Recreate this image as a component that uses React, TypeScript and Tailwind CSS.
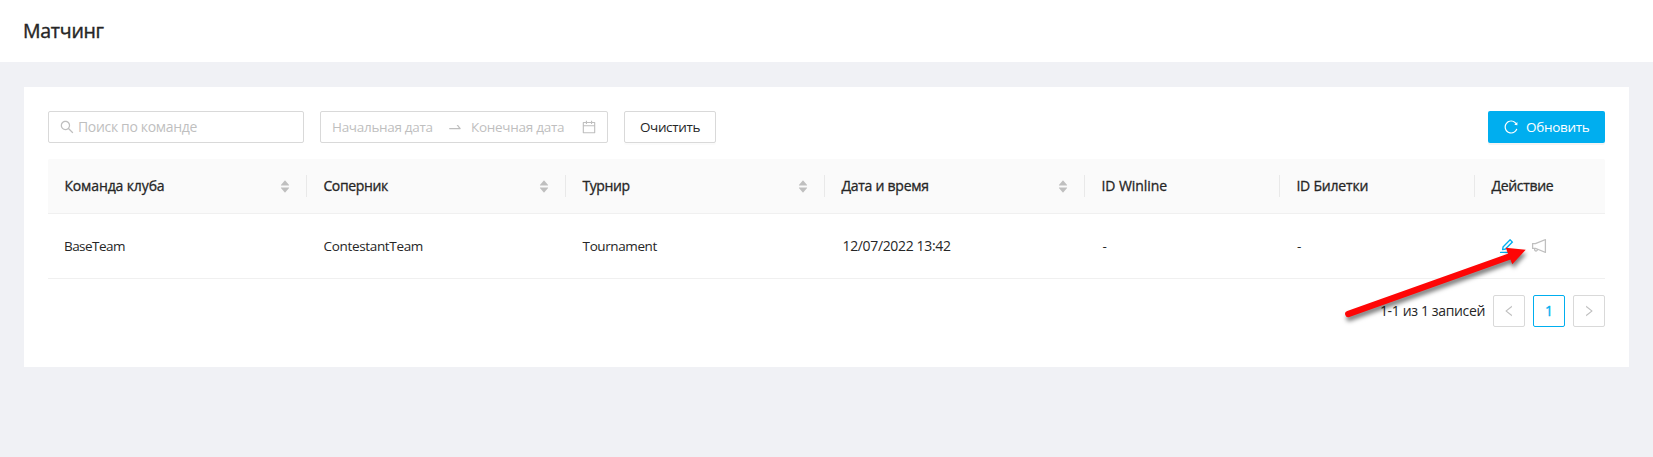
import React from "react";
import {
  AiOutlineSearch,
  AiOutlineSwapRight,
  AiOutlineCalendar,
  AiOutlineReload,
  AiOutlineEdit,
  AiOutlineNotification,
  AiOutlineLeft,
  AiOutlineRight,
  AiFillCaretUp,
  AiFillCaretDown,
} from "react-icons/ai";

const columns = [
  { title: "Команда клуба", sortable: true, tracking: "tracking-[-0.12px]" },
  { title: "Соперник", sortable: true, tracking: "tracking-[-0.35px]" },
  { title: "Турнир", sortable: true, tracking: "tracking-[-0.4px]" },
  { title: "Дата и время", sortable: true, tracking: "tracking-[-0.25px]" },
  { title: "ID Winline", sortable: false, tracking: "tracking-[-0.05px]" },
  { title: "ID Билетки", sortable: false, tracking: "tracking-[-0.2px]" },
  { title: "Действие", sortable: false, tracking: "tracking-[-0.3px]" },
];

function Sorter() {
  return (
    <span className="flex flex-col items-center text-[12px] text-[#bfbfbf]">
      <AiFillCaretUp />
      <AiFillCaretDown className="-mt-[5px]" />
    </span>
  );
}

function Toolbar() {
  return (
    <div className="flex h-8 items-center gap-4 text-[13.5px]">
      <div className="flex h-8 w-64 items-center rounded-xs border border-[#d9d9d9] pl-[10px] text-[#bfbfbf]">
        <AiOutlineSearch className="mr-[3px] size-4" />
        <span className="text-[14px] tracking-[-0.33px]">Поиск по команде</span>
      </div>
      <div className="flex h-8 w-72 items-center rounded-xs border border-[#d9d9d9] pr-[10px] pl-[11px] text-[#bfbfbf]">
        <span className="w-[115px] tracking-[-0.3px]">Начальная дата</span>
        <AiOutlineSwapRight className="mr-2 size-4" />
        <span className="flex-1 tracking-[-0.28px]">Конечная дата</span>
        <AiOutlineCalendar className="size-4" />
      </div>
      <button className="h-8 w-[92px] rounded-xs border border-[#d9d9d9] shadow-[0_2px_0_rgba(0,0,0,0.016)]">
        <span className="tracking-[-0.35px]">Очистить</span>
      </button>
      <button className="ml-auto flex h-8 w-[117px] items-center rounded-xs bg-[#00aeef] pl-[15px] text-white shadow-[0_2px_0_rgba(0,0,0,0.045)]">
        <AiOutlineReload className="mr-[7px] size-4" />
        <span className="tracking-[-0.3px]">Обновить</span>
      </button>
    </div>
  );
}

const grid =
  "grid grid-cols-[259px_259px_259px_260px_195px_195px_1fr] items-center border-b border-[#f0f0f0]";

export default function App() {
  return (
    <div className="relative h-[457px] w-[1653px] overflow-hidden bg-[#f0f1f5] font-['Open_Sans','Noto_Sans',sans-serif] text-[14px] leading-[22px] whitespace-nowrap text-[#262626]">
      <header className="flex h-[62px] items-center bg-white px-[23px]">
        <h1 className="text-[19.5px] tracking-[-0.25px] [-webkit-text-stroke:0.4px]">Матчинг</h1>
      </header>
      <main className="mx-6 mt-[25px] h-[280px] bg-white p-6">
        <Toolbar />
        <div className="mt-4">
          <div className={`${grid} h-[55px] rounded-t-xs bg-[#fafafa]`}>
            {columns.map((c, i) => (
              <div
                key={c.title}
                className={`flex h-[22px] items-center justify-between pr-[15px] pl-[16.4px] ${i < columns.length - 1 ? "border-r border-[#e9e9e9]" : ""}`}
              >
                <span className={`[-webkit-text-stroke:0.3px] ${c.tracking}`}>{c.title}</span>
                {c.sortable && <Sorter />}
              </div>
            ))}
          </div>
          <div className={`${grid} h-[65px] text-[13.5px]`}>
            <span className="pl-4 tracking-[-0.55px]">BaseTeam</span>
            <span className="pl-[16.5px] tracking-[-0.33px]">ContestantTeam</span>
            <span className="pl-[16.6px] tracking-[-0.4px]">Tournament</span>
            <span className="pl-[17.5px] text-[14px] tracking-[-0.35px]">12/07/2022 13:42</span>
            <span className="pl-[17.5px]">-</span>
            <span className="pl-[17px]">-</span>
            <span className="flex gap-[14px] pl-[23px]">
              <AiOutlineEdit className="size-[18px] text-[#00aeef]" />
              <AiOutlineNotification className="size-[18px] text-[#bfbfbf]" />
            </span>
          </div>
        </div>
        <div className="mt-4 flex items-center justify-end gap-2">
          <span className="tracking-[-0.35px]">1-1 из 1 записей</span>
          <span className="flex size-8 items-center justify-center rounded-xs border border-[#d9d9d9] text-[#bfbfbf]">
            <AiOutlineLeft className="size-[14px]" />
          </span>
          <span className="flex size-8 items-center justify-center rounded-xs border border-[#00aeef] text-[#00aeef] [-webkit-text-stroke:0.35px]">
            1
          </span>
          <span className="flex size-8 items-center justify-center rounded-xs border border-[#d9d9d9] text-[#bfbfbf]">
            <AiOutlineRight className="size-[14px]" />
          </span>
        </div>
      </main>
      <svg
        className="pointer-events-none absolute top-[235px] left-[1335px] drop-shadow-[1px_4px_2px_rgba(0,0,0,0.5)]"
        width="205"
        height="95"
        viewBox="1335 235 205 95"
      >
        <path d="M1348.3 314 L1511 256" stroke="#fe0606" strokeWidth="6.4" strokeLinecap="round" />
        <path d="M1525.7 249.8 L1505.7 247.7 L1512.3 264.3 Z" fill="#fe0606" />
      </svg>
    </div>
  );
}
